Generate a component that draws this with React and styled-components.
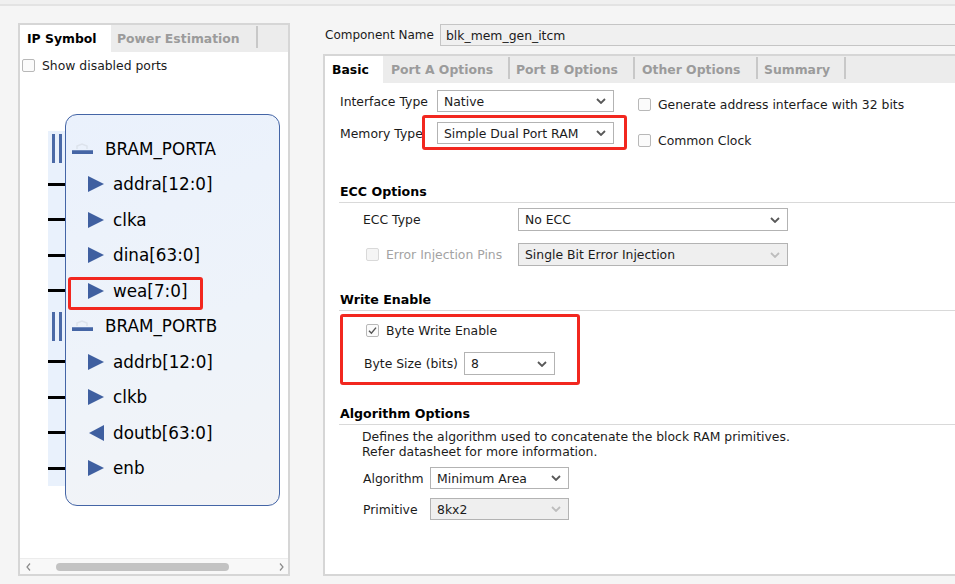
import React from 'react';
import styled, { createGlobalStyle, css } from 'styled-components';

const GlobalStyle = createGlobalStyle`
  html, body {
    margin: 0;
    padding: 0;
  }
  body {
    background: #f5f5f5;
    font-family: "DejaVu Sans", Verdana, sans-serif;
    font-size: 12.4px;
    color: #1b1b1b;
    overflow: hidden;
  }
`;

const Page = styled.div`
  width: 955px;
  height: 584px;
  overflow: hidden;
  background: #f5f5f5;
`;

const TopRule = styled.div`
  height: 4px;
  background: #f0f0f0;
  border-bottom: 2px solid #e3e3e3;
`;

const Main = styled.div`
  display: flex;
  align-items: flex-start;
  padding: 17px 0 0 18px;
`;

/* ---------- shared bits ---------- */

const TabBar = styled.div`
  display: flex;
  height: 27px;
  flex-shrink: 0;
  background: #ececec;
`;

const Tab = styled.div`
  position: relative;
  width: ${({ w }) => w}px;
  box-sizing: border-box;
  padding-left: ${({ pad }) => pad || 7}px;
  display: flex;
  align-items: center;
  font-weight: bold;
  font-size: 12.4px;
  white-space: nowrap;
  color: ${({ active }) => (active ? '#000' : '#9b9b9b')};
  background: ${({ active }) => (active ? '#fff' : 'transparent')};
  ${({ active }) => !active && css`
    &::after {
      content: '';
      position: absolute;
      right: 0;
      top: 1px;
      bottom: 4px;
      width: 2px;
      background: #c8c8c8;
    }
  `}
`;

const Box = styled.span`
  width: 13px;
  height: 13px;
  box-sizing: border-box;
  flex-shrink: 0;
  border: 1px solid ${({ disabled }) => (disabled ? '#d9d9d9' : '#b8b8b8')};
  border-radius: 2px;
  background: ${({ disabled }) => (disabled ? '#f5f5f5' : '#fbfbfb')};
  display: inline-flex;
  align-items: center;
  justify-content: center;
`;

const CheckRow = styled.div`
  display: flex;
  align-items: center;
  gap: 7px;
  height: 15px;
  margin-left: ${({ indent }) => indent || 0}px;
  color: ${({ disabled }) => (disabled ? '#a3a3a3' : '#1b1b1b')};
  white-space: nowrap;
`;

const Checkbox = ({ checked, disabled, label, indent }) => (
  <CheckRow disabled={disabled} indent={indent}>
    <Box disabled={disabled}>
      {checked && (
        <svg width="11" height="11" viewBox="0 0 11 11">
          <path d="M2 5.8 L4.4 8.3 L9 2.6" fill="none" stroke="#555" strokeWidth="1.4" />
        </svg>
      )}
    </Box>
    {label}
  </CheckRow>
);

/* ---------- left panel ---------- */

const LeftPanel = styled.section`
  width: 272px;
  height: 553px;
  box-sizing: border-box;
  flex-shrink: 0;
  border: 2px solid #d6d6d6;
  background: #fff;
  display: flex;
  flex-direction: column;
`;

const PortsOption = styled.div`
  margin: 6px 0 0 2px;
`;

const Canvas = styled.div`
  flex: 1;
  padding: 41px 0 0 28px;
`;

const Symbol = styled.div`
  display: flex;
`;

const PinColumn = styled.div`
  width: 17px;
  padding-top: 17px;
  display: flex;
  flex-direction: column;
`;

const PinGroup = styled.div`
  background: #e9f1fc;
`;

const PinSlot = styled.div`
  height: 35.5px;
  display: flex;
  align-items: center;
`;

const PortLine = styled.div`
  width: 17px;
  height: 3px;
  background: #000;
`;

const BusBars = styled.div`
  margin-left: 4px;
  width: 10px;
  height: 29px;
  box-sizing: border-box;
  border-left: 3px solid #4b6aa7;
  border-right: 3px solid #4b6aa7;
`;

const Block = styled.div`
  width: 215px;
  height: 392px;
  box-sizing: border-box;
  padding-top: 16px;
  border: 1px solid #4465a6;
  border-radius: 12px;
  background: linear-gradient(160deg, #eaf1fc 0%, #eef3fa 55%, #f2f3f6 100%);
`;

const SymRow = styled.div`
  position: relative;
  height: 35.5px;
  display: flex;
  align-items: center;
  font-size: 16.8px;
  color: #000;
  white-space: nowrap;
  ${({ highlight }) => highlight && css`
    &::after {
      content: '';
      position: absolute;
      left: 2px;
      width: 135px;
      top: 4px;
      bottom: -1px;
      box-sizing: border-box;
      border: 3px solid #f2271f;
      border-radius: 3px;
    }
  `}
`;

const BusIcon = styled.svg`
  margin-left: 6px;
  margin-right: 12px;
  flex-shrink: 0;
`;

const PortIcon = styled.svg`
  margin-left: 22px;
  margin-right: 9px;
  flex-shrink: 0;
`;

const ScrollBar = styled.div`
  height: 16px;
  flex-shrink: 0;
  box-sizing: border-box;
  border-top: 1px solid #ececec;
  background: #f8f8f8;
  display: flex;
  align-items: center;
`;

const Thumb = styled.div`
  margin-left: 25px;
  width: 173px;
  height: 8px;
  border-radius: 4px;
  background: #c3c3c3;
`;

const Arrow = styled.svg`
  margin-left: ${({ ml }) => ml || 0}px;
  margin-right: ${({ mr }) => mr || 0}px;
  flex-shrink: 0;
`;

const Spacer = styled.div`
  flex: 1;
`;

const busA = ['addra[12:0]', 'clka', 'dina[63:0]', 'wea[7:0]'];
const busB = ['addrb[12:0]', 'clkb', 'doutb[63:0]', 'enb'];

const BusGlyph = () => (
  <BusIcon width="21" height="16" viewBox="0 0 21 16">
    <path d="M5 8 L5 5 L10 3 L15 5 L15 8" fill="none" stroke="#dde3ec" strokeWidth="1.5" />
    <rect x="0" y="9" width="21" height="4" fill="#4565a5" />
    <rect x="0" y="9" width="21" height="1" fill="#6d88bb" />
  </BusIcon>
);

const PortGlyph = ({ out }) => (
  <PortIcon width="16" height="16" viewBox="0 0 16 16">
    {out
      ? <polygon points="16,0 1,8 16,16" fill="#3f5fa0" />
      : <polygon points="0,0 16,8 0,16" fill="#3f5fa0" />}
  </PortIcon>
);

const PinGroupView = () => (
  <PinGroup>
    <PinSlot><BusBars /></PinSlot>
    {[0, 1, 2, 3].map((i) => <PinSlot key={i}><PortLine /></PinSlot>)}
  </PinGroup>
);

const IpSymbol = () => (
  <Symbol>
    <PinColumn>
      <PinGroupView />
      <PinGroupView />
    </PinColumn>
    <Block>
      <SymRow><BusGlyph />BRAM_PORTA</SymRow>
      {busA.map((p) => (
        <SymRow key={p} highlight={p === 'wea[7:0]'}><PortGlyph />{p}</SymRow>
      ))}
      <SymRow><BusGlyph />BRAM_PORTB</SymRow>
      {busB.map((p) => (
        <SymRow key={p}><PortGlyph out={p.startsWith('dout')} />{p}</SymRow>
      ))}
    </Block>
  </Symbol>
);

/* ---------- right panel ---------- */

const RightColumn = styled.div`
  margin-left: 33px;
  width: 700px;
  flex-shrink: 0;
`;

const NameRow = styled.div`
  margin-top: 1px;
  height: 22px;
  display: flex;
  align-items: center;
`;

const NameLabel = styled.span`
  width: 117px;
  padding-left: 2px;
  box-sizing: border-box;
  font-size: 12px;
  white-space: nowrap;
`;

const NameInput = styled.div`
  width: 580px;
  height: 22px;
  box-sizing: border-box;
  border: 1px solid #c5c5c5;
  background: #f0f0f0;
  padding-left: 5px;
  display: flex;
  align-items: center;
`;

const TabPanel = styled.section`
  margin-top: 8px;
  height: 522px;
  box-sizing: border-box;
  border: 2px solid #d6d6d6;
  border-right: none;
  background: #fff;
  display: flex;
  flex-direction: column;
`;

const Content = styled.div`
  padding-left: 14px;
  display: flex;
  flex-direction: column;
`;

const TopGrid = styled.div`
  margin-top: 7px;
  height: 54px;
  display: flex;
  align-items: flex-start;
`;

const FieldStack = styled.div`
  display: flex;
  flex-direction: column;
  gap: 10px;
`;

const CheckStack = styled.div`
  margin-left: 24px;
  padding-top: 7px;
  display: flex;
  flex-direction: column;
  gap: 21px;
`;

const Field = styled.div`
  display: flex;
  align-items: center;
  padding-left: ${({ indent }) => indent || 0}px;
  margin-top: ${({ mt }) => mt || 0}px;
`;

const Label = styled.span`
  width: ${({ w }) => w}px;
  flex-shrink: 0;
  white-space: nowrap;
  color: ${({ disabled }) => (disabled ? '#a3a3a3' : '#1b1b1b')};
`;

const SelectBox = styled.div`
  position: relative;
  width: ${({ w }) => w}px;
  height: ${({ h }) => h || 22}px;
  box-sizing: border-box;
  border: 1px solid #b3b3b3;
  background: ${({ disabled }) => (disabled ? '#efefef' : '#fff')};
  padding: 0 7px 0 6px;
  display: flex;
  align-items: center;
  justify-content: space-between;
  white-space: nowrap;
  ${({ highlight }) => highlight && css`
    &::after {
      content: '';
      position: absolute;
      left: -16px;
      right: -14px;
      top: -8px;
      bottom: -7px;
      border: 3px solid #f2271f;
      border-radius: 3px;
    }
  `}
`;

const Select = ({ value, w, h, disabled, highlight }) => (
  <SelectBox w={w} h={h} disabled={disabled} highlight={highlight}>
    {value}
    <svg width="10" height="6" viewBox="0 0 10 6">
      <polyline points="1,1 5,5 9,1" fill="none" stroke={disabled ? '#bdbdbd' : '#585858'} strokeWidth="1.8" />
    </svg>
  </SelectBox>
);

const SectionHeader = styled.div`
  margin-top: ${({ mt }) => mt}px;
  padding: 0 0 2px 1px;
  line-height: 16px;
  font-size: 12.6px;
  font-weight: bold;
  color: #000;
  border-bottom: 1px solid #d9d9d9;
`;

const Highlight = styled.div`
  margin: 3px 0 0 1px;
  width: 240px;
  height: 71px;
  box-sizing: border-box;
  border: 3px solid #f2271f;
  border-radius: 3px;
  padding: 6px 0 0 21px;
`;

const Description = styled.p`
  margin: 4px 0 0;
  padding-left: 23px;
  line-height: 15px;
  color: #1b1b1b;
`;

const App = () => (
  <Page>
    <GlobalStyle />
    <TopRule />
    <Main>
      <LeftPanel>
        <TabBar>
          <Tab active w={91}>IP Symbol</Tab>
          <Tab w={147} pad={6}>Power Estimation</Tab>
        </TabBar>
        <PortsOption>
          <Checkbox label="Show disabled ports" />
        </PortsOption>
        <Canvas>
          <IpSymbol />
        </Canvas>
        <ScrollBar>
          <Arrow ml={6} width="5" height="8" viewBox="0 0 5 8">
            <polyline points="4,0.5 1,4 4,7.5" fill="none" stroke="#8a8a8a" strokeWidth="1.2" />
          </Arrow>
          <Thumb />
          <Spacer />
          <Arrow mr={4} width="5" height="8" viewBox="0 0 5 8">
            <polyline points="1,0.5 4,4 1,7.5" fill="none" stroke="#8a8a8a" strokeWidth="1.2" />
          </Arrow>
        </ScrollBar>
      </LeftPanel>

      <RightColumn>
        <NameRow>
          <NameLabel>Component Name</NameLabel>
          <NameInput>blk_mem_gen_itcm</NameInput>
        </NameRow>
        <TabPanel>
          <TabBar>
            <Tab active w={58}>Basic</Tab>
            <Tab w={127} pad={8}>Port A Options</Tab>
            <Tab w={125} pad={6}>Port B Options</Tab>
            <Tab w={123}>Other Options</Tab>
            <Tab w={88} pad={6}>Summary</Tab>
          </TabBar>
          <Content>
            <TopGrid>
              <FieldStack>
                <Field indent={1}>
                  <Label w={97}>Interface Type</Label>
                  <Select value="Native" w={177} />
                </Field>
                <Field indent={1}>
                  <Label w={97}>Memory Type</Label>
                  <Select value="Simple Dual Port RAM" w={177} highlight />
                </Field>
              </FieldStack>
              <CheckStack>
                <Checkbox label="Generate address interface with 32 bits" />
                <Checkbox label="Common Clock" />
              </CheckStack>
            </TopGrid>

            <SectionHeader mt={40}>ECC Options</SectionHeader>
            <Field indent={24} mt={5}>
              <Label w={155}>ECC Type</Label>
              <Select value="No ECC" w={270} h={23} />
            </Field>
            <Field indent={24} mt={12}>
              <Label w={155} disabled>
                <Checkbox disabled indent={3} label="Error Injection Pins" />
              </Label>
              <Select value="Single Bit Error Injection" w={270} h={23} disabled />
            </Field>

            <SectionHeader mt={26}>Write Enable</SectionHeader>
            <Highlight>
              <Checkbox checked indent={2} label="Byte Write Enable" />
              <Field mt={14}>
                <Label w={100}>Byte Size (bits)</Label>
                <Select value="8" w={91} h={23} />
              </Field>
            </Highlight>

            <SectionHeader mt={21}>Algorithm Options</SectionHeader>
            <Description>
              Defines the algorithm used to concatenate the block RAM primitives.
              <br />
              Refer datasheet for more information.
            </Description>
            <Field indent={24} mt={8}>
              <Label w={67}>Algorithm</Label>
              <Select value="Minimum Area" w={139} />
            </Field>
            <Field indent={24} mt={9}>
              <Label w={67}>Primitive</Label>
              <Select value="8kx2" w={139} disabled />
            </Field>
          </Content>
        </TabPanel>
      </RightColumn>
    </Main>
  </Page>
);

export default App;
